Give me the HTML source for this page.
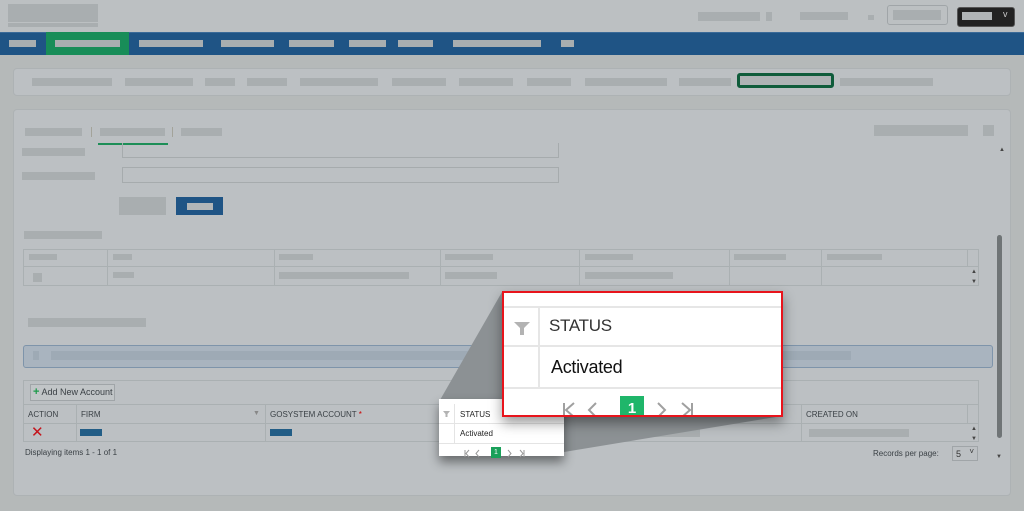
<!DOCTYPE html>
<html><head><meta charset="utf-8"><style>
*{margin:0;padding:0;box-sizing:border-box}
body{width:1024px;height:511px;overflow:hidden;background:#b5b9b9;position:relative;font-family:"Liberation Sans",sans-serif}
.a{position:absolute}
.b{position:absolute;background:#a9aeb0}
.t{position:absolute;font-size:9px;color:#3a4045;white-space:nowrap}
</style></head><body>
<div class="a" style="left:0;top:0;width:1024px;height:32px;background:#bcc0c2"></div>
<div class="b" style="left:8px;top:4px;width:90px;height:18px"></div>
<div class="b" style="left:8px;top:23px;width:90px;height:4px"></div>
<div class="b" style="left:698px;top:12px;width:62px;height:9px"></div>
<div class="b" style="left:766px;top:12px;width:6px;height:9px"></div>
<div class="b" style="left:800px;top:12px;width:48px;height:8px"></div>
<div class="b" style="left:868px;top:15px;width:6px;height:5px"></div>
<div class="a" style="left:887px;top:5px;width:61px;height:20px;border:1px solid #a0a5a8;border-radius:3px"></div>
<div class="b" style="left:893px;top:10px;width:48px;height:10px"></div>
<div class="a" style="left:957px;top:7px;width:58px;height:20px;background:#222;border-radius:3px;border:1px solid #555"></div>
<div class="b" style="left:962px;top:12px;width:30px;height:8px;background:#b0b4b6"></div>
<div class="a" style="left:1003px;top:9px;color:#ccc;font-size:9px">v</div>
<!-- nav -->
<div class="a" style="left:0;top:32px;width:1024px;height:23px;background:#1f5485;border-top:1px solid #3a6a98"></div>
<div class="a" style="left:46px;top:32px;width:83px;height:23px;background:#188d58"></div>
<div class="b" style="left:9px;top:40px;width:27px;height:7px"></div>
<div class="b" style="left:55px;top:40px;width:65px;height:7px"></div>
<div class="b" style="left:139px;top:40px;width:64px;height:7px"></div>
<div class="b" style="left:221px;top:40px;width:53px;height:7px"></div>
<div class="b" style="left:289px;top:40px;width:45px;height:7px"></div>
<div class="b" style="left:349px;top:40px;width:37px;height:7px"></div>
<div class="b" style="left:398px;top:40px;width:35px;height:7px"></div>
<div class="b" style="left:453px;top:40px;width:88px;height:7px"></div>
<div class="b" style="left:561px;top:40px;width:13px;height:7px"></div>
<!-- subnav -->
<div class="a" style="left:13px;top:68px;width:998px;height:28px;background:#bcc0c3;border:1px solid #adb2b4;border-radius:4px"></div>
<div class="b" style="left:32px;top:78px;width:80px;height:8px"></div>
<div class="b" style="left:125px;top:78px;width:68px;height:8px"></div>
<div class="b" style="left:205px;top:78px;width:30px;height:8px"></div>
<div class="b" style="left:247px;top:78px;width:40px;height:8px"></div>
<div class="b" style="left:300px;top:78px;width:78px;height:8px"></div>
<div class="b" style="left:392px;top:78px;width:54px;height:8px"></div>
<div class="b" style="left:459px;top:78px;width:54px;height:8px"></div>
<div class="b" style="left:527px;top:78px;width:44px;height:8px"></div>
<div class="b" style="left:585px;top:78px;width:82px;height:8px"></div>
<div class="b" style="left:679px;top:78px;width:52px;height:8px"></div>
<div class="a" style="left:737px;top:73px;width:97px;height:15px;border:3px solid #0f5c3b;border-radius:3px;background:#aeb3b5"></div>
<div class="b" style="left:840px;top:78px;width:93px;height:8px"></div>
<!-- main panel -->
<div class="a" style="left:13px;top:109px;width:998px;height:387px;background:#bcc0c3;border:1px solid #adb2b4;border-radius:4px"></div>
<div class="b" style="left:25px;top:128px;width:57px;height:8px"></div>
<div class="a" style="left:91px;top:127px;width:1px;height:10px;background:#a3a39a"></div>
<div class="b" style="left:100px;top:128px;width:65px;height:8px"></div>
<div class="a" style="left:172px;top:127px;width:1px;height:10px;background:#a3a39a"></div>
<div class="b" style="left:181px;top:128px;width:41px;height:8px"></div>
<div class="a" style="left:98px;top:143px;width:70px;height:2px;background:#1d8e57"></div>
<div class="b" style="left:874px;top:125px;width:94px;height:11px"></div>
<div class="b" style="left:983px;top:125px;width:11px;height:11px"></div>
<div class="b" style="left:22px;top:148px;width:63px;height:8px"></div>
<div class="a" style="left:122px;top:143px;width:437px;height:15px;border:1px solid #a6abad;border-top:none"></div>
<div class="b" style="left:22px;top:172px;width:73px;height:8px"></div>
<div class="a" style="left:122px;top:167px;width:437px;height:16px;border:1px solid #a6abad"></div>
<div class="b" style="left:119px;top:197px;width:47px;height:18px"></div>
<div class="a" style="left:176px;top:197px;width:47px;height:18px;background:#1f5485"></div>
<div class="b" style="left:187px;top:203px;width:26px;height:7px;background:#b2b6b8"></div>
<div class="a" style="left:999px;top:147px;font-size:6px;color:#444">▲</div>
<div class="b" style="left:24px;top:231px;width:78px;height:8px"></div>
<!-- table 1 -->
<div class="a" style="left:23px;top:249px;width:956px;height:37px;border:1px solid #aab0b2"></div>
<div class="a" style="left:24px;top:266px;width:954px;height:1px;background:#aab0b2"></div>
<div class="a" style="left:107px;top:250px;width:1px;height:35px;background:#aab0b2"></div>
<div class="a" style="left:274px;top:250px;width:1px;height:35px;background:#aab0b2"></div>
<div class="a" style="left:440px;top:250px;width:1px;height:35px;background:#aab0b2"></div>
<div class="a" style="left:579px;top:250px;width:1px;height:35px;background:#aab0b2"></div>
<div class="a" style="left:729px;top:250px;width:1px;height:35px;background:#aab0b2"></div>
<div class="a" style="left:821px;top:250px;width:1px;height:35px;background:#aab0b2"></div>
<div class="a" style="left:967px;top:250px;width:1px;height:16px;background:#aab0b2"></div>
<div class="b" style="left:29px;top:254px;width:28px;height:6px"></div>
<div class="b" style="left:113px;top:254px;width:19px;height:6px"></div>
<div class="b" style="left:279px;top:254px;width:34px;height:6px"></div>
<div class="b" style="left:445px;top:254px;width:48px;height:6px"></div>
<div class="b" style="left:585px;top:254px;width:48px;height:6px"></div>
<div class="b" style="left:734px;top:254px;width:52px;height:6px"></div>
<div class="b" style="left:827px;top:254px;width:55px;height:6px"></div>
<div class="b" style="left:33px;top:273px;width:9px;height:9px"></div>
<div class="b" style="left:113px;top:272px;width:21px;height:6px"></div>
<div class="b" style="left:279px;top:272px;width:130px;height:7px"></div>
<div class="b" style="left:445px;top:272px;width:52px;height:7px"></div>
<div class="b" style="left:585px;top:272px;width:88px;height:7px"></div>
<div class="a" style="left:971px;top:267px;font-size:6px;color:#444;line-height:10px">▲<br>▼</div>
<div class="b" style="left:28px;top:318px;width:118px;height:9px"></div>
<div class="a" style="left:23px;top:345px;width:970px;height:23px;background:#a9b4bf;border:1px solid #7e94aa;border-radius:3px"></div>
<div class="b" style="left:33px;top:351px;width:6px;height:9px;background:#9eaab5"></div>
<div class="b" style="left:51px;top:351px;width:800px;height:9px;background:#9eaab5"></div>
<!-- scrollbar -->
<div class="a" style="left:997px;top:235px;width:5px;height:203px;background:#6f7476;border-radius:3px"></div>
<div class="a" style="left:996px;top:454px;font-size:6px;color:#444">▼</div>
<!-- grid 2 -->
<div class="a" style="left:23px;top:380px;width:956px;height:62px;border:1px solid #aab0b2"></div>
<div class="a" style="left:30px;top:384px;width:85px;height:17px;border:1px solid #a0a5a8;background:#c1c5c7"></div>
<div class="t" style="left:33px;top:387px;font-size:9px"><span style="color:#1c9a4a;font-weight:bold;font-size:11px;line-height:9px">+</span> Add New Account</div>
<div class="a" style="left:24px;top:404px;width:954px;height:1px;background:#aab0b2"></div>
<div class="a" style="left:24px;top:423px;width:954px;height:1px;background:#aab0b2"></div>
<div class="a" style="left:76px;top:405px;width:1px;height:36px;background:#aab0b2"></div>
<div class="a" style="left:265px;top:405px;width:1px;height:36px;background:#aab0b2"></div>
<div class="a" style="left:801px;top:405px;width:1px;height:36px;background:#aab0b2"></div>
<div class="a" style="left:967px;top:405px;width:1px;height:18px;background:#aab0b2"></div>
<div class="t" style="left:28px;top:410px;font-size:8px">ACTION</div>
<div class="t" style="left:81px;top:410px;font-size:8px">FIRM</div>
<div class="a" style="left:253px;top:410px;font-size:7px;color:#888">▼</div>
<div class="t" style="left:270px;top:410px;font-size:8px">GOSYSTEM ACCOUNT <span style="color:#c00">*</span></div>
<div class="t" style="left:806px;top:410px;font-size:8px">CREATED ON</div>
<div class="a" style="left:31px;top:425px;color:#c4141c;font-size:15px;line-height:15px">✕</div>
<div class="a" style="left:80px;top:429px;width:22px;height:7px;background:#225d86"></div>
<div class="a" style="left:270px;top:429px;width:22px;height:7px;background:#225d86"></div>
<div class="b" style="left:809px;top:429px;width:100px;height:8px"></div>
<div class="b" style="left:650px;top:429px;width:50px;height:8px"></div>
<div class="a" style="left:971px;top:424px;font-size:6px;color:#444;line-height:10px">▲<br>▼</div>
<div class="t" style="left:25px;top:448px;font-size:8px">Displaying items 1 - 1 of 1</div>
<div class="t" style="left:873px;top:449px;font-size:8px">Records per page:</div>
<div class="a" style="left:952px;top:446px;width:26px;height:15px;border:1px solid #a0a5a8;font-size:9px;color:#333;padding:2px 3px">5 <span style="font-size:8px;position:absolute;right:3px;top:0">˅</span></div>
<!-- callout connector -->
<svg class="a" style="left:0;top:0" width="1024" height="511"><polygon points="440,400 502,292 782,416 564,452 564,400" fill="#8c9194"/></svg>
<!-- small box -->
<div class="a" style="left:439px;top:399px;width:125px;height:57px;background:#fff;box-shadow:0 6px 10px rgba(0,0,0,.45)"></div>
<div class="a" style="left:439px;top:423px;width:125px;height:1px;background:#e4e4e4"></div>
<div class="a" style="left:439px;top:443px;width:125px;height:1px;background:#e4e4e4"></div>
<div class="a" style="left:454px;top:404px;width:1px;height:39px;background:#e4e4e4"></div>
<svg class="a" style="left:443px;top:411px" width="7" height="6"><path d="M0 0 H7 L4.5 3 V6 H2.5 V3 Z" fill="#b3b3b3"/></svg>
<div class="t" style="left:460px;top:410px;font-size:8px;color:#222">STATUS</div>
<div class="t" style="left:460px;top:429px;font-size:8px;color:#222">Activated</div>
<svg class="a" style="left:463px;top:449px" width="100" height="10"><g stroke="#999" fill="none" stroke-width="1"><path d="M2 1V8M6 1L3 4.5L6 8"/><path d="M16 1L13 4.5L16 8"/><path d="M45 1L48 4.5L45 8"/><path d="M57 1L60 4.5L57 8M61 1V8"/></g></svg>
<div class="a" style="left:491px;top:447px;width:10px;height:11px;background:#1aa05a;color:#fff;font-size:7px;text-align:center;line-height:11px">1</div>
<!-- big box -->
<div class="a" style="left:502px;top:291px;width:281px;height:126px;background:#fff;border:2px solid #e8141c;box-shadow:0 6px 12px rgba(0,0,0,.4);overflow:hidden">
  <div class="a" style="left:0;top:13px;width:281px;height:2px;background:#e6e6e6"></div>
  <div class="a" style="left:0;top:52px;width:281px;height:2px;background:#e6e6e6"></div>
  <div class="a" style="left:0;top:94px;width:281px;height:2px;background:#e6e6e6"></div>
  <div class="a" style="left:34px;top:15px;width:2px;height:79px;background:#e6e6e6"></div>
  <svg class="a" style="left:9px;top:28px" width="18" height="16"><path d="M1 1 H17 L11 7 V14 H7 V7 Z" fill="#b3b3b3"/></svg>
  <div class="a" style="left:45px;top:23px;font-size:17px;color:#333;letter-spacing:-0.3px">STATUS</div>
  <div class="a" style="left:47px;top:64px;font-size:18px;color:#111;letter-spacing:-0.3px">Activated</div>
  <svg class="a" style="left:0;top:100px" width="281" height="24"><g stroke="#a0a0a0" fill="none" stroke-width="2"><path d="M60 10V24M70 10L62 17L70 24"/><path d="M92 10L85 17L92 24"/><path d="M154 10L161 17L154 24"/><path d="M178 10L186 17L178 24M188 10V24"/></g></svg>
  <div class="a" style="left:116px;top:103px;width:24px;height:24px;background:#1fb66a;color:#fff;font-size:15px;font-weight:bold;text-align:center;line-height:26px">1</div>
</div>
</body></html>
